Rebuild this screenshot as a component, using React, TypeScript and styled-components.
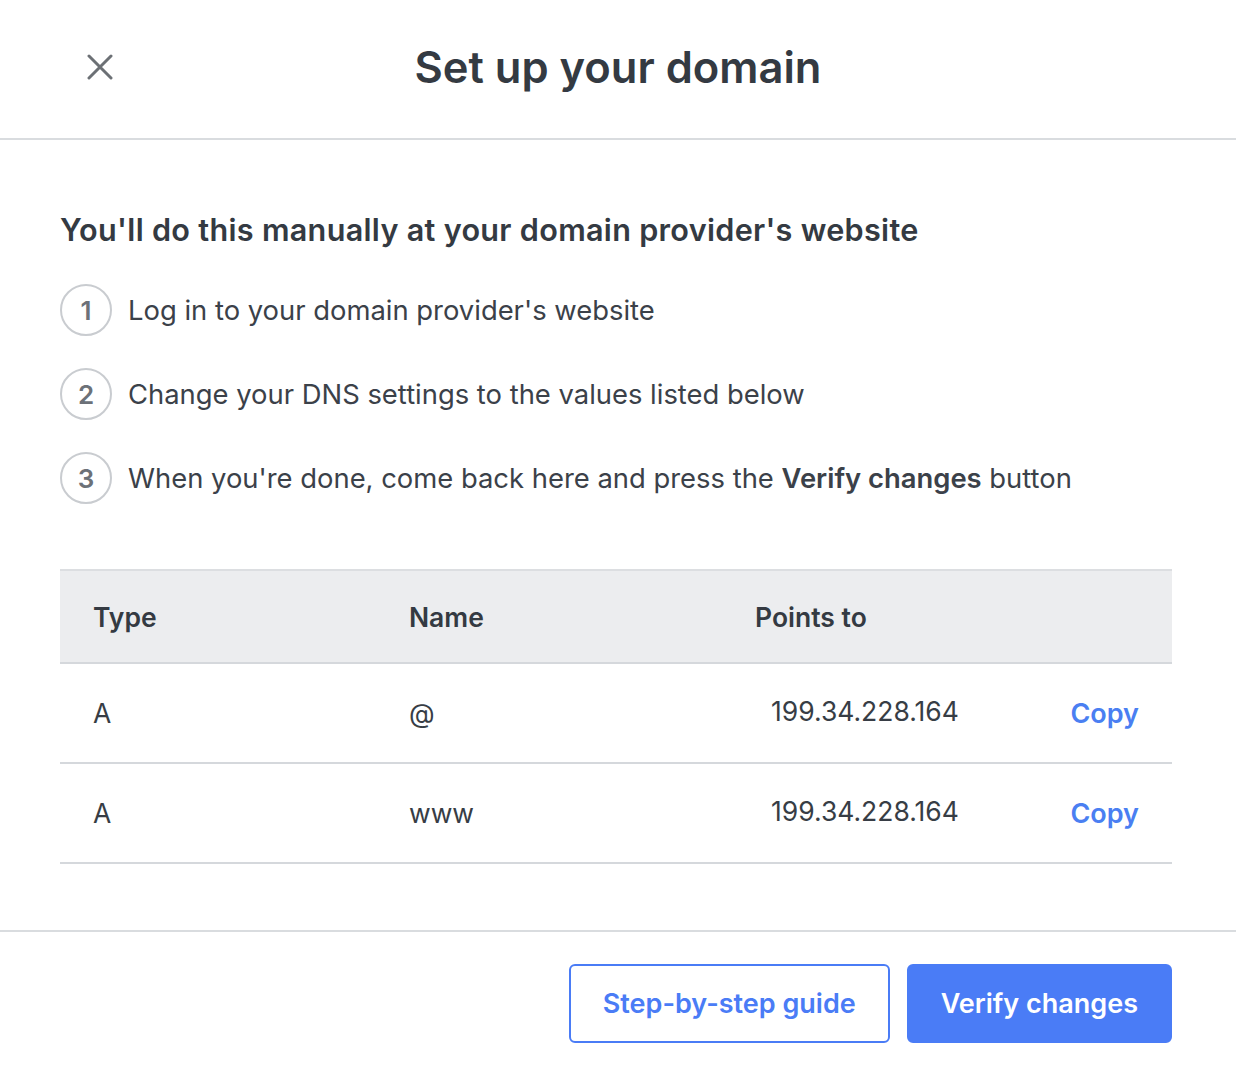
import React from "react";
import styled, { createGlobalStyle } from "styled-components";

const Global = createGlobalStyle`
  html, body { margin: 0; padding: 0; background: #ffffff; }
  body { font-family: Inter, Lato, "Liberation Sans", sans-serif; color: #373d45; }
  * { box-sizing: border-box; }
`;

const Page = styled.div`
  width: 1236px;
  height: 1072px;
  display: flex;
  flex-direction: column;
  overflow: hidden;
`;

const Header = styled.header`
  height: 140px;
  flex: none;
  border-bottom: 2px solid #d9dcdf;
  display: grid;
  grid-template-columns: 200px 1fr 200px;
  align-items: center;
  padding: 0 0 4px 0;
`;

const CloseButton = styled.button`
  justify-self: start;
  margin-left: 84px;
  width: 32px;
  height: 32px;
  border: none;
  background: none;
  padding: 0;
  display: flex;
  align-items: center;
  justify-content: center;
  cursor: pointer;
`;

const Title = styled.h1`
  margin: 0;
  text-align: center;
  font-size: 43.5px;
  font-weight: 600;
  color: #343a42;
`;

const Body = styled.main`
  flex: 1;
  padding: 66px 64px 0 60px;
  display: flex;
  flex-direction: column;
`;

const Heading = styled.h2`
  margin: 0 0 30px 0;
  font-size: 30.6px;
  line-height: 48px;
  font-weight: 600;
  letter-spacing: 0.3px;
  color: #343a42;
`;

const Steps = styled.ol`
  list-style: none;
  margin: 0;
  padding: 0;
  display: flex;
  flex-direction: column;
  gap: 32px;
`;

const Step = styled.li`
  display: flex;
  align-items: center;
  gap: 16px;
  height: 52px;
  font-size: 27.4px;
  color: #3b4149;

  b { font-weight: 600; }
`;

const Num = styled.span`
  width: 52px;
  height: 52px;
  flex: none;
  border: 2px solid #c9ccd0;
  border-radius: 50%;
  display: flex;
  align-items: center;
  justify-content: center;
  font-size: 26px;
  font-weight: 600;
  color: #6c7178;
`;

const Table = styled.div`
  margin-top: 65px;
  display: flex;
  flex-direction: column;
`;

const HeadRow = styled.div`
  height: 95px;
  background: #ecedef;
  border-top: 2px solid #dcdee1;
  border-bottom: 2px solid #d5d8dc;
  display: grid;
  grid-template-columns: 316px 346px 1fr;
  align-items: center;
  padding-left: 33px;
  font-size: 26.5px;
  font-weight: 600;
  color: #343a42;
`;

const Row = styled.div`
  height: 100px;
  border-bottom: 2px solid #d5d8dc;
  display: grid;
  grid-template-columns: 316px 362px 1fr auto;
  align-items: center;
  padding-left: 33px;
  padding-right: 33px;
  font-size: 26.5px;
  color: #373d45;
`;

const Value = styled.span<{ $shift?: number }>`
  padding-bottom: ${(p) => p.$shift ?? 0}px;
`;

const CopyLink = styled.button`
  border: none;
  background: none;
  padding: 0;
  font-family: inherit;
  font-size: 27px;
  font-weight: 600;
  color: #4a7ff2;
  cursor: pointer;
`;

const Footer = styled.footer`
  height: 142px;
  flex: none;
  border-top: 2px solid #d9dcdf;
  display: flex;
  justify-content: flex-end;
  align-items: flex-start;
  gap: 17px;
  padding: 32px 64px 0 0;
`;

const Button = styled.button<{ $primary?: boolean }>`
  height: 79px;
  padding: 0 32px;
  border-radius: 6px;
  font-family: inherit;
  font-size: 27px;
  font-weight: 600;
  cursor: pointer;
  border: 2px solid #4a7cf6;
  background: ${(p) => (p.$primary ? "#4a7cf6" : "#ffffff")};
  color: ${(p) => (p.$primary ? "#ffffff" : "#4a7cf6")};
`;

const rows = [
  { type: "A", name: "@", to: "199.34.228.164" },
  { type: "A", name: "www", to: "199.34.228.164" },
];

export default function App() {
  return (
    <Page>
      <Global />
      <Header>
        <CloseButton aria-label="Close">
          <svg width="26" height="26" viewBox="0 0 26 26">
            <path d="M2 2 L24 24 M24 2 L2 24" stroke="#6c7075" strokeWidth="3" strokeLinecap="round" />
          </svg>
        </CloseButton>
        <Title>Set up your domain</Title>
        <span />
      </Header>
      <Body>
        <Heading>You'll do this manually at your domain provider's website</Heading>
        <Steps>
          <Step>
            <Num>1</Num>
            <span>Log in to your domain provider's website</span>
          </Step>
          <Step>
            <Num>2</Num>
            <span>Change your DNS settings to the values listed below</span>
          </Step>
          <Step>
            <Num>3</Num>
            <span>
              When you're done, come back here and press the <b>Verify changes</b> button
            </span>
          </Step>
        </Steps>
        <Table>
          <HeadRow>
            <span>Type</span>
            <span>Name</span>
            <span>Points to</span>
          </HeadRow>
          {rows.map((r, i) => (
            <Row key={i}>
              <span>{r.type}</span>
              <span>{r.name}</span>
              <Value $shift={4}>{r.to}</Value>
              <CopyLink>Copy</CopyLink>
            </Row>
          ))}
        </Table>
      </Body>
      <Footer>
        <Button>Step-by-step guide</Button>
        <Button $primary>Verify changes</Button>
      </Footer>
    </Page>
  );
}
